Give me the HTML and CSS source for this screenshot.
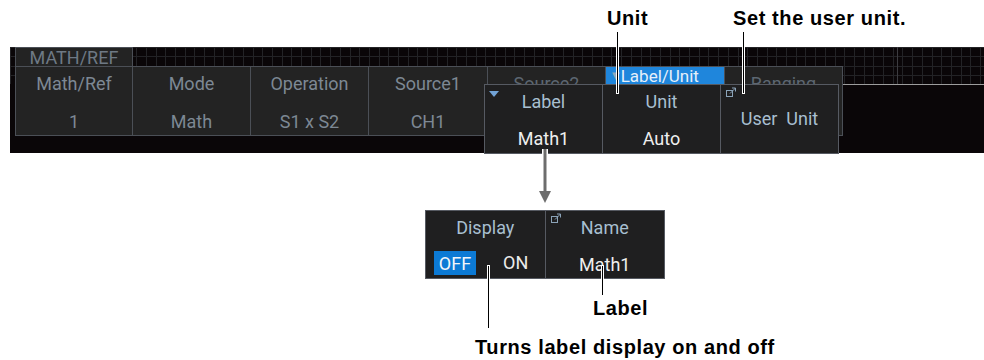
FILE: index.html
```html
<!DOCTYPE html>
<html lang="en">
<head>
    <meta charset="UTF-8">
    <title>MATH/REF - Label/Unit</title>
    <link rel="stylesheet" href="styles.css">
</head>
<body>
    <div class="figure">
        <!-- callouts above the screen -->
        <div class="callout" id="calloutUnit">Unit</div>
        <div class="callout" id="calloutUser">Set the user unit.</div>

        <div class="screen">
            <div class="tabrow">
                <div class="tab">MATH/REF</div>
            </div>
            <div class="menu">
                <div class="key">
                    <span class="key-name">Math/Ref</span>
                    <span class="key-value">1</span>
                </div>
                <div class="key">
                    <span class="key-name">Mode</span>
                    <span class="key-value">Math</span>
                </div>
                <div class="key">
                    <span class="key-name">Operation</span>
                    <span class="key-value">S1 x S2</span>
                </div>
                <div class="key key-wide">
                    <span class="key-name">Source1</span>
                    <span class="key-value">CH1</span>
                </div>
                <div class="key key-dim">
                    <span class="key-name">Source2</span>
                </div>
                <div class="key key-wide key-active">
                    <span class="key-head"><span class="tri">&#9660;</span>Label/Unit</span>
                </div>
                <div class="key key-dim">
                    <span class="key-name">Ranging</span>
                </div>
                <div class="tail"></div>
            </div>
        </div>

        <!-- Label/Unit sub menu -->
        <div class="popup" id="labelMenu">
            <div class="cell">
                <span class="corner-tri"></span>
                <span class="cell-name">Label</span>
                <span class="cell-value">Math1</span>
            </div>
            <div class="cell">
                <span class="cell-name">Unit</span>
                <span class="cell-value">Auto</span>
            </div>
            <div class="cell cell-single">
                <svg class="open-icon" width="11" height="11" viewBox="0 0 11 11">
                    <rect x="0.5" y="3.5" width="6" height="6" fill="none" stroke="#8ba3b8" stroke-width="1"/>
                    <path d="M4 6.5 L9.5 1 M6 1 H9.5 V4.5" fill="none" stroke="#8ba3b8" stroke-width="1"/>
                </svg>
                <span class="cell-name">User&nbsp; Unit</span>
            </div>
        </div>

        <svg class="down-arrow" width="20" height="56" viewBox="0 0 20 56">
            <path d="M10 0 V44" stroke="#fff" stroke-width="6"/>
            <path d="M10 0 V44" stroke="#6d6d6d" stroke-width="3"/>
            <path d="M4 42 H16 L10 54 Z" fill="#6d6d6d"/>
        </svg>

        <!-- Label sub menu -->
        <div class="popup" id="displayMenu">
            <div class="cell cell-display">
                <span class="cell-name">Display</span>
                <div class="switch">
                    <span class="switch-on">OFF</span>
                    <span class="switch-off">ON</span>
                </div>
            </div>
            <div class="cell cell-namebox">
                <svg class="open-icon" width="11" height="11" viewBox="0 0 11 11">
                    <rect x="0.5" y="3.5" width="6" height="6" fill="none" stroke="#8ba3b8" stroke-width="1"/>
                    <path d="M4 6.5 L9.5 1 M6 1 H9.5 V4.5" fill="none" stroke="#8ba3b8" stroke-width="1"/>
                </svg>
                <span class="cell-name">Name</span>
                <span class="cell-value">Math1</span>
            </div>
        </div>

        <!-- leader lines -->
        <div class="leader" id="leaderUnit"></div>
        <div class="leader" id="leaderUser"></div>
        <div class="leader" id="leaderName"></div>
        <div class="leader" id="leaderDisplay"></div>

        <div class="callout" id="calloutLabel">Label</div>
        <div class="callout" id="calloutDisplay">Turns label display on and off</div>
    </div>
</body>
</html>
```

FILE: styles.css
```css
body {
    margin: 0;
    background-color: #fff;
}

.figure {
    position: relative;
    width: 984px;
    height: 360px;
    overflow: hidden;
    background-color: #fff;
    font-family: Roboto, "DejaVu Sans", sans-serif;
}

/* scope screen strip */
.screen {
    margin: 47px 0 0 10px;
    padding-left: 5px;
    height: 106px;
    background:
        linear-gradient(to bottom, transparent 37px, #0a0608 37px),
        linear-gradient(#3c3c40, #3c3c40) 887px 0 / 1px 37px no-repeat,
        repeating-linear-gradient(90deg, #232326 0 1px, transparent 1px 9.7px),
        repeating-linear-gradient(180deg, #232326 0 1px, transparent 1px 9.4px),
        #0a0608;
}

.tabrow {
    display: flex;
    height: 19px;
}

.tab {
    width: 116px;
    border: 1px solid #4b4f56;
    border-bottom: none;
    background-color: #232323;
    color: #6e7985;
    font-size: 18px;
    line-height: 19px;
    text-align: center;
}

.menu {
    display: flex;
    align-items: flex-start;
}

.key {
    flex: 0 0 118px;
    box-sizing: border-box;
    height: 70px;
    padding-top: 4px;
    display: flex;
    flex-direction: column;
    align-items: center;
    background-color: #232323;
    border: 1px solid #4b4f56;
    border-left: none;
    color: #7d8894;
    font-size: 18px;
}

.key:first-child {
    border-left: 1px solid #4b4f56;
}

.key-wide {
    flex-basis: 119px;
}

.key-name {
    line-height: 26px;
}

.key-value {
    margin-top: 12px;
    line-height: 26px;
}

.key-dim {
    color: #5d6772;
}

/* the sub menu covers the lower part of these keys */
.key-dim .key-name {
    height: 13px;
    overflow: hidden;
}

.key-active {
    padding-top: 0;
    align-items: stretch;
}

.key-head {
    height: 18px;
    background-color: #1f86dc;
    color: #e6f0fa;
    line-height: 18px;
    padding-left: 6px;
    font-size: 17px;
}

.key-head .tri {
    color: #8fa8c0;
    font-size: 10px;
    vertical-align: 3px;
    margin-right: 1px;
}

.tail {
    flex: 1;
    height: 18px;
    border-bottom: 1px solid #9d9d9d;
}

/* sub menus */
.popup {
    position: absolute;
    display: flex;
    box-sizing: border-box;
    border: 1px solid #565a62;
    background-color: #1f1f20;
    font-size: 18px;
}

#labelMenu {
    left: 484px;
    top: 84px;
    width: 355px;
    height: 70px;
}

#displayMenu {
    left: 425px;
    top: 210px;
    width: 240px;
    height: 69px;
}

.cell {
    position: relative;
    flex: 1;
    display: flex;
    flex-direction: column;
    align-items: center;
    padding-top: 4px;
    border-right: 1px solid #565a62;
}

.cell:last-child {
    border-right: none;
}

.cell-name {
    color: #a8bfd1;
    line-height: 26px;
}

.cell-value {
    margin-top: 11px;
    line-height: 26px;
    color: #efefef;
}

.cell-single {
    justify-content: center;
    padding-top: 0;
}

.corner-tri {
    position: absolute;
    left: 4px;
    top: 6px;
    width: 0;
    height: 0;
    border-left: 5px solid transparent;
    border-right: 5px solid transparent;
    border-top: 6px solid #72a3d6;
}

.open-icon {
    position: absolute;
    left: 5px;
    top: 2px;
}

.switch {
    display: flex;
    align-items: center;
    align-self: stretch;
    margin-top: 10px;
    padding-left: 8px;
}

.switch-on {
    width: 42px;
    height: 24px;
    line-height: 25px;
    text-align: center;
    background-color: #0c7ad5;
    color: #f2f6fa;
}

.switch-off {
    margin-left: 27px;
    line-height: 24px;
    color: #ececec;
}

.cell-namebox .cell-value {
    margin-top: 11px;
}

/* annotations */
.callout {
    position: absolute;
    font-family: "Liberation Sans", Arial, sans-serif;
    font-weight: bold;
    font-size: 20px;
    line-height: 20px;
    letter-spacing: 0.6px;
    color: #000;
    white-space: nowrap;
}

#calloutUnit { left: 607px; top: 8px; }
#calloutUser { left: 733px; top: 8px; }
#calloutLabel { left: 593px; top: 298px; }
#calloutDisplay { left: 475px; top: 337px; }

.leader {
    position: absolute;
    width: 1px;
    background-color: #000;
    box-shadow: 0 0 0 1px #fff;
}

#leaderUnit { left: 617px; top: 32px; height: 61px; }
#leaderUser { left: 743px; top: 32px; height: 61px; }
#leaderName { left: 602px; top: 266px; height: 29px; }
#leaderDisplay { left: 488px; top: 266px; height: 62px; }

.down-arrow {
    position: absolute;
    left: 535px;
    top: 149px;
}
```
